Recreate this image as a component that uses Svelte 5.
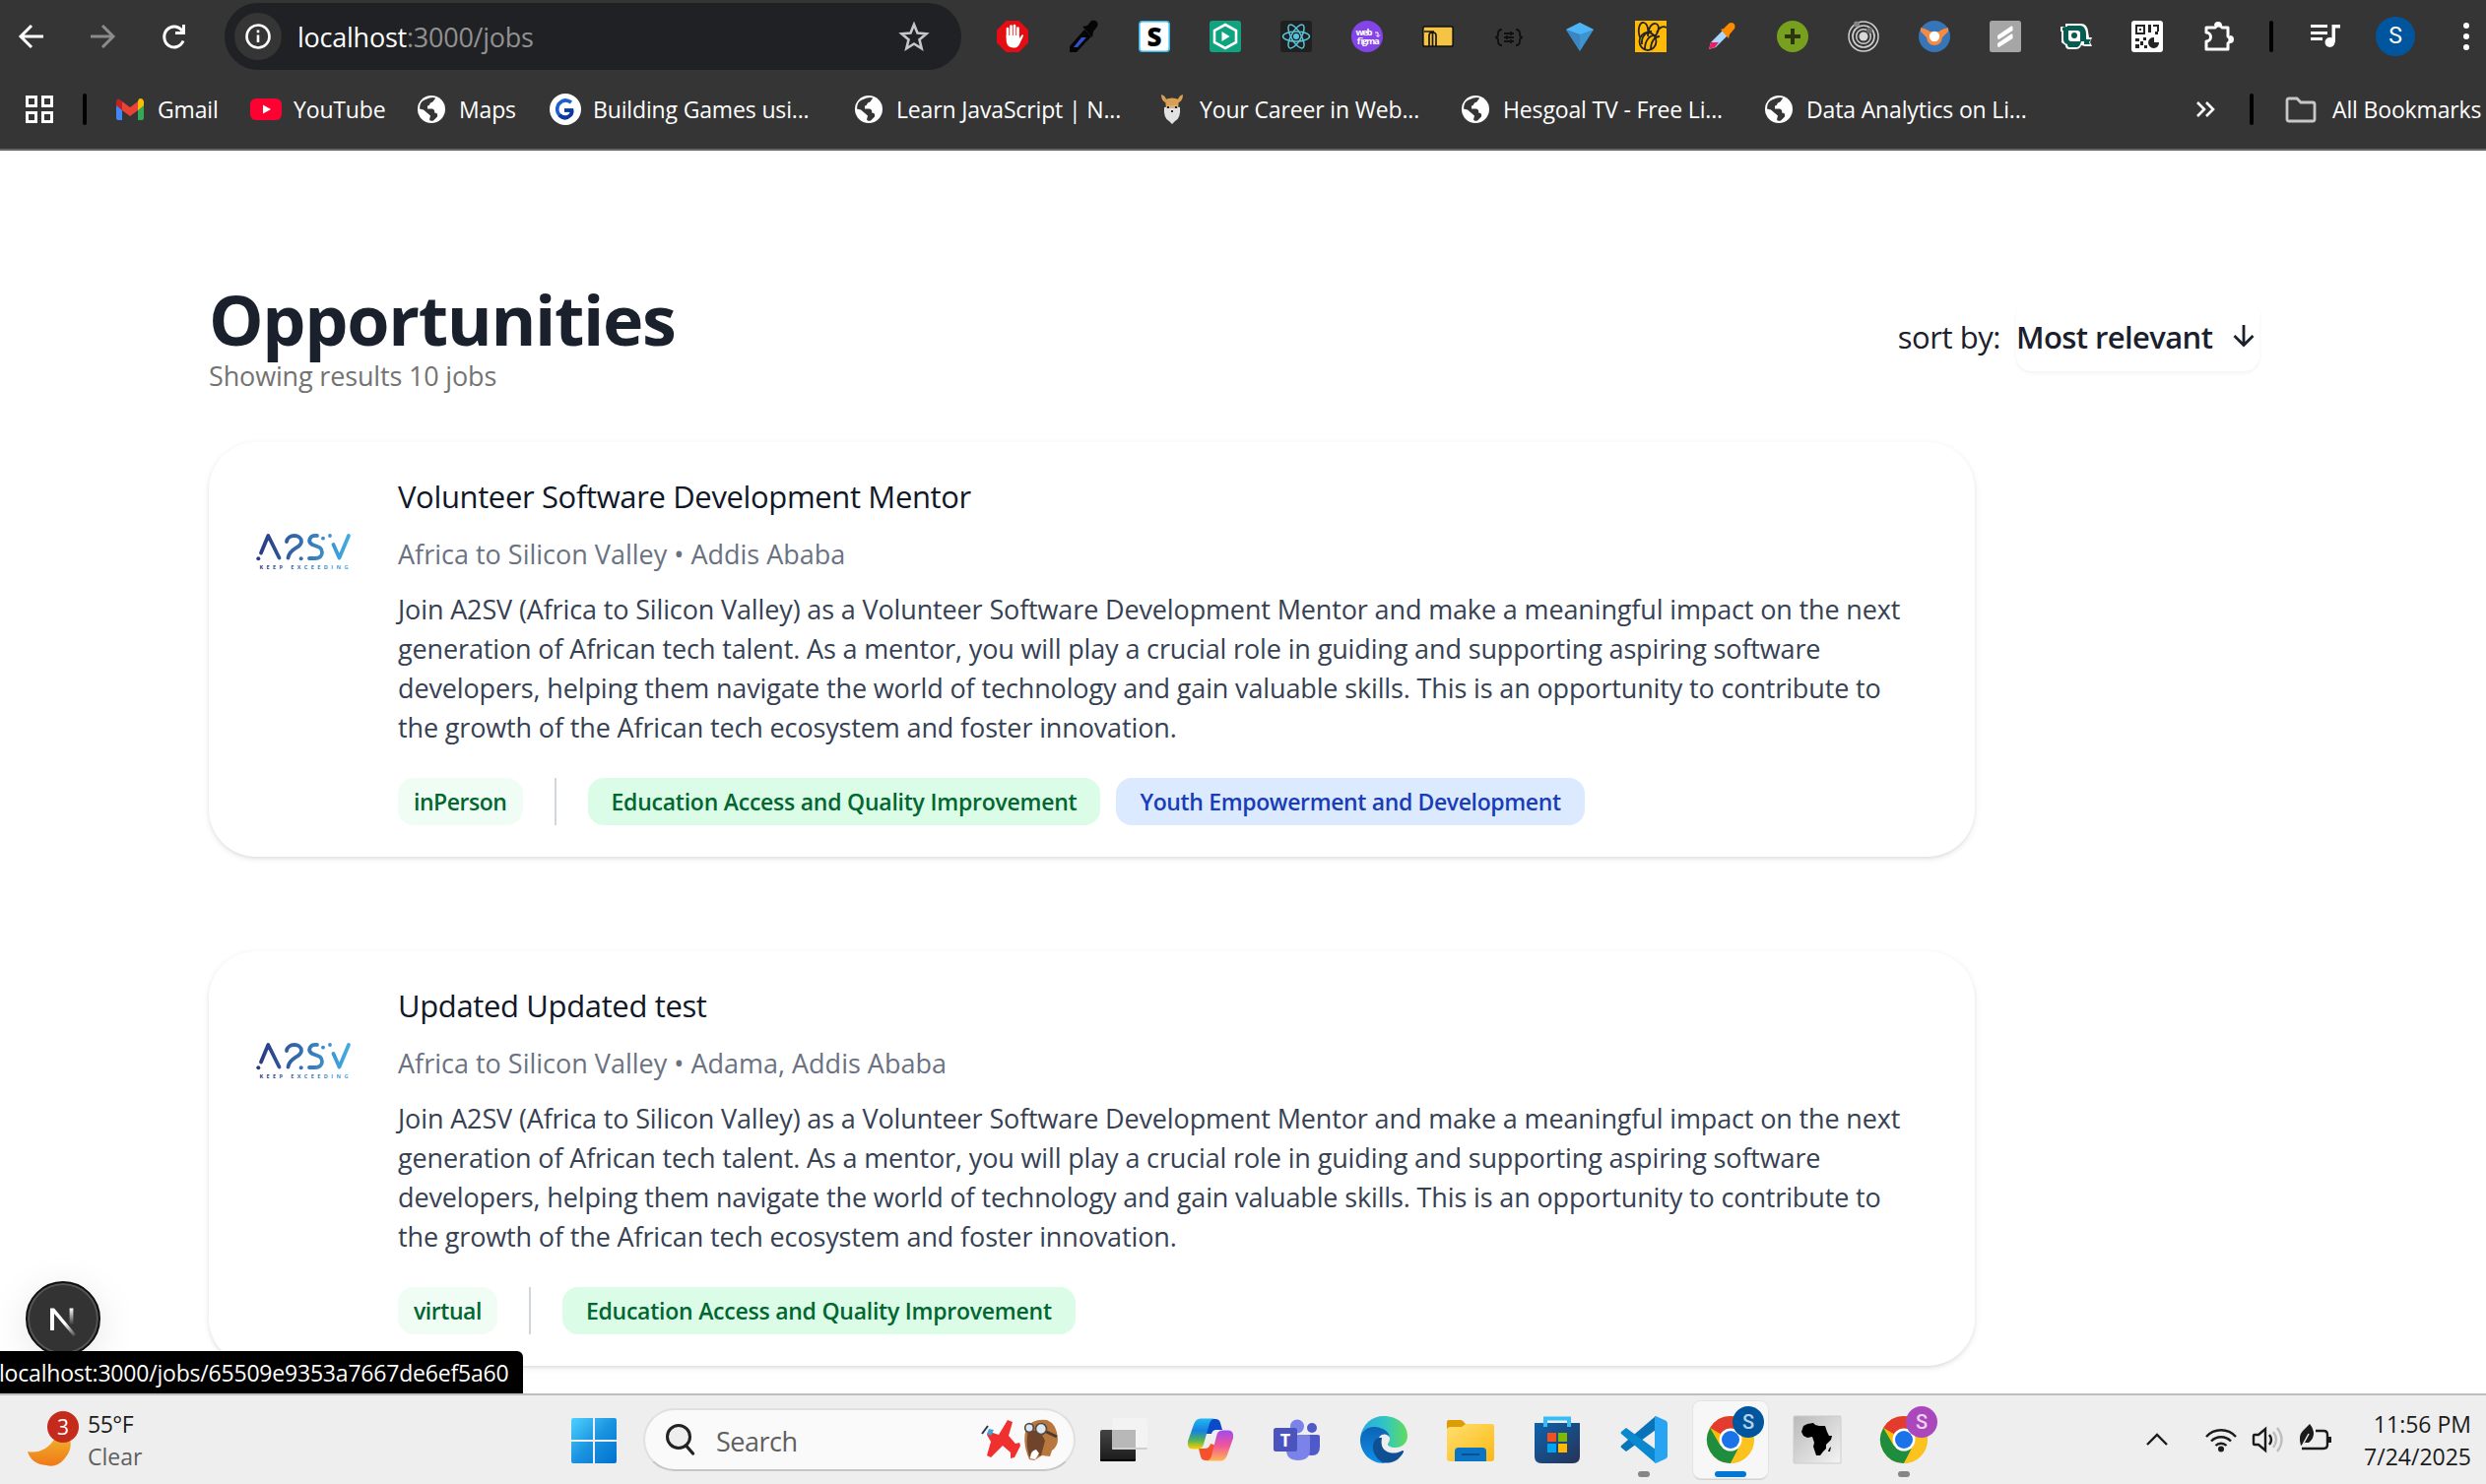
<script>
  const icons = {
    back: '<path d="M28 16H6M16 5 5 16l11 11" fill="none" stroke="#fff" stroke-width="3"/>',
    forward: '<path d="M4 16h22M16 5l11 11-11 11" fill="none" stroke="#8b8b8b" stroke-width="3"/>',
    reload: '<path d="M25 20.500a10 10.500 0 1 1-1-10" fill="none" stroke="#fff" stroke-width="3"/><path d="M27 4v10H17v-3h7V4z" fill="#fff"/>',
    info: '<circle cx="16" cy="16" r="11.500" fill="none" stroke="#fff" stroke-width="2.600"/><path d="M16 14.500v7.500M16 9.500v2.800" stroke="#fff" stroke-width="2.600"/>',
    star: '<path d="m16 4 3.500 8.600 9 .7-7 6 2.200 9L16 23.500l-7.700 4.800 2.200-9-7-6 9-.7z" fill="none" stroke="#c7c7c7" stroke-width="2.600"/>',
    puzzle: '<path d="M6 7h7a4 4 0 0 1 7 0h6v9a4 4 0 0 1 0 7v6H4v-8a4.500 4.500 0 0 0 0-9V7z" fill="none" stroke="#fff" stroke-width="3" stroke-linejoin="round"/><path d="M12 5a4 4 0 0 1 8 0zM28 15a4 4 0 0 1 0 8z" fill="#fff"/>',
    music: '<path d="M1 5.500h17M1 12.500h17M1 18.500h12" stroke="#fff" stroke-width="3"/><circle cx="20.500" cy="22" r="5" fill="#fff"/><path d="M22.500 22V4H31v3.500h-5V22z" fill="#fff"/>',
    dots: '<circle cx="16" cy="5" r="3" fill="#fff"/><circle cx="16" cy="16" r="3" fill="#fff"/><circle cx="16" cy="27" r="3" fill="#fff"/>',
    hand: '<path d="M9.500 0h13L32 9.500v13L22.500 32h-13L0 22.500v-13z" fill="#e30d13"/><path d="M11 17V8M14.500 16V5.500M18 16V5M21.500 17V7.500" stroke="#fff" stroke-width="2.700" stroke-linecap="round"/><path d="M9.700 15h13.200l.5 3 1.600-3c1-1.500 2.500-.8 2 .5l-4 8.500c-1.500 3-3.500 3.500-6 3.500-4.500 0-7.300-3-7.300-7.500z" fill="#fff"/>',
    dropper: '<path d="M2 32v-6L17 9l7 7L9 32z" fill="#050505"/><path d="M6 27 14 17h5l-9 10z" fill="#3152c4"/><path d="m15 6 5-1 4-5c5-1 8 2 6 6l-4 5-1 6z" fill="#050505"/>',
    slant: '<rect x=".8" y=".8" width="30.400" height="30.400" rx="3" fill="#fff" stroke="#38b8e8" stroke-width="1.600"/><text x="16" y="25.500" font-family="Open Sans" font-weight="800" font-size="26" text-anchor="middle" fill="#000">S</text>',
    play: '<rect width="32" height="32" rx="3" fill="#10a37f"/><path d="m16 4 11 6v12l-11 6-11-6V10z" fill="none" stroke="#fff" stroke-width="2.600"/><path d="M12.500 11v10l8-5z" fill="#fff"/>',
    react: '<rect width="32" height="32" rx="3" fill="#202020"/><g fill="none" stroke="#57c4dc" stroke-width="1.500"><ellipse cx="16" cy="16" rx="13.500" ry="5"/><ellipse cx="16" cy="16" rx="13.500" ry="5" transform="rotate(60 16 16)"/><ellipse cx="16" cy="16" rx="13.500" ry="5" transform="rotate(120 16 16)"/></g><circle cx="16" cy="16" r="3" fill="#57c4dc"/>',
    webfigma: '<circle cx="16" cy="16" r="16" fill="#8344e8"/><g font-family="Open Sans" font-weight="700" font-size="9.500" fill="#fff"><text x="4.500" y="15" textLength="17">web</text><text x="4.500" y="23.500" textLength="23">figma</text></g><path d="M24 12h3v4m-2-1.500 2 2 2-2" fill="none" stroke="#fff"/>',
    folderArc: '<rect x=".8" y="5.800" width="30.400" height="20.400" rx="2" fill="#f6c444" stroke="#161616" stroke-width="1.700"/><path d="M2 11h10M7 26V15q0-3 3-3h1q3 0 3 3v11M10.500 12V26" fill="none" stroke="#161616" stroke-width="1.700"/>',
    braces: '<path d="M9 9q-4 0-4 4v1q0 3-3 3 3 0 3 3v1q0 4 4 4M23 9q4 0 4 4v1q0 3 3 3-3 0-3 3v1q0 4-4 4M11 13h10M11 17h10M11 21h10M18 11v4M14 15v4M18 19v4" fill="none" stroke="#111" stroke-width="1.900"/>',
    gem: '<path d="M2 9 16 2l14 7-14 22z" fill="#3d94d1"/><path d="M2 9 16 2l14 7-14 5z" fill="#4db5f5"/><path d="M16 14v17L2 9z" fill="#3a86c0"/>',
    bee: '<path d="M0 0h32v32H0z" fill="#ffba08"/><g fill="none" stroke="#222" stroke-width="1.800"><ellipse cx="13" cy="21" rx="8.500" ry="9"/><path d="M5 17C2 8 5 1 9 2s5 8 4 14M13 15c0-7 4-13 8-12s4 8-1 13M7 24C6 16 12 10 17 11M10 29c0-9 5-15 11-14M16 29c0-8 4-13 9-13M22 12c2-5 6-7 10-5"/></g>',
    picker: '<path d="M3 29 5 22 17 10l5 5L10 27z" fill="#a9d7ff"/><path d="m3 29 2-7h8l-4 5z" fill="#ec1c64"/><path d="m15 9 3-1 5-5c4-3 8 1 6 5l-5 6-1 4z" fill="#ff8a00"/>',
    plus: '<circle cx="16" cy="16" r="16" fill="#76a01d"/><path d="M16 8v16M8 16h16" stroke="#2c3510" stroke-width="4"/>',
    orbit: '<g fill="none" stroke="#cfcfcf"><circle cx="16" cy="16" r="15" stroke-width="1.500"/><circle cx="16" cy="16" r="11" stroke-width="1.700"/><circle cx="16" cy="16" r="7.300" stroke-width="1.500"/></g><circle cx="16" cy="16" r="4.500" fill="#d8d8d8"/><circle cx="9" cy="3.500" r="3" fill="#858585"/><circle cx="22" cy="10" r="3" fill="#6b6b6b"/>',
    ring: '<circle cx="16" cy="16" r="16" fill="#3675b8"/><path d="M2 7q8 2 9 4h10q1-2 9-4v4l-6 6q-1 8-8 8t-8-8l-6-6z" fill="#f58a42"/><circle cx="16" cy="16" r="5.200" fill="#fff"/>',
    scrimba: '<rect width="32" height="32" rx="2.500" fill="#a6a6a6"/><path d="m8 15 14-9.500q1.500-.5 1.500 1v3.500L9.500 19Q8 19 8 17zm0 8 14-9.500q1.500-.5 1.500 1V18L9.500 27Q8 27 8 25z" fill="#fff"/>',
    ebird: '<path d="M5 3h16q6 0 7 8l1 6h3l-2 5 2 4h-7l-4-1q-1 4-6 4H9q-4 0-4-4l-4-3V11H0V6h5z" fill="#fff"/><path d="M2 7q1-1 5-1V5h13q5 0 6 8v6h5l-2 3 1 2h-6v-3h-3q-1 5-4 6H9q-2 0-2-3-4-1-4-5V10H2z" fill="#065c50"/><path d="M8 10h9q3 0 3 3v8H11q-3 0-3-3z" fill="#fff"/><circle cx="14" cy="15" r="3" fill="#065c50"/>',
    qr: '<rect width="32" height="32" rx="3" fill="#fff"/><g fill="#252525"><path d="M4 4h10v10H4zm2 2v6h6V6zM8 8h2v2H8zM17 4h3v8h-3zM22 4h6v7h-2V6h-4zM4 18h4v3H4zM9 21h3v4H9zM4 24h4v4H4zM12 17h3v3h-3zM13 25h3v3h-3zM24 11h3v3h-3z"/><path d="M23 17v5h5a5.500 5.500 0 1 1-5-5z"/></g>',
    apps: '<path d="M3.500 3.500h9v9h-9zM19.500 3.500h9v9h-9zM3.500 19.500h9v9h-9zM19.500 19.500h9v9h-9z" fill="none" stroke="#fff" stroke-width="3"/>',
    gmail: '<path d="M2 8v17q0 2 2 2h4V13z" fill="#4285f4"/><path d="M30 8v17q0 2-2 2h-4V13z" fill="#34a853"/><path d="M24 8v9l6-5V8q-1-4-5-2.500z" fill="#fbbc04"/><path d="M8 8v9l8 6 8-6V8l-8 6z" fill="#ea4335"/><path d="M8 17V8Q3 3 2 8v4z" fill="#c5221f"/>',
    youtube: '<rect y="5" width="32" height="22" rx="6" fill="#ff0033"/><path d="M13 11.500v9l8-4.500z" fill="#fff"/>',
    globe: '<circle cx="16" cy="16" r="14" fill="#fff"/><path d="M14 4.500q4-1 6 0-1 4-5 5-1 3-3 3v3h5q3 1 2 4 4 0 3 4l-4 4q-3 1-4-1l1-4-7-6-4-1q0-7 5-9z" fill="#353535"/><path d="M19 6q4 0 7 6-2 5-6 3-4-2-5 0-2-4 2-5z" fill="#fff"/>',
    gcircle: '<circle cx="16" cy="16" r="16" fill="#fff"/><path d="M22 9q-7-5-13 2-3 6 1 11 6 5 11 0 2-2 1.500-5H15" fill="none" stroke="#1d5fd0" stroke-width="3.600"/><path d="M10 22q6 5 11 0 2-2 1.500-5H15" fill="none" stroke="#0b3a9c" stroke-width="3.600"/>',
    yak: '<path d="M5 1q0 6 4 8h14q4-2 4-8-4 1-5 5H10Q9 2 5 1z" fill="#d7a055"/><path d="M9 6q7-3 14 0l-1 10H10z" fill="#d7a055"/><path d="M8 14q4-1 8 0 4-1 8 0 1 11-5 14l-3 3-3-3Q7 25 8 14z" fill="#e2e2e2"/><path d="M10 12h12v3H10z" fill="#dcae80"/><path d="M11 14h2M19 14h2M15 18h2" stroke="#222" stroke-width="1.800"/>',
    chevrons: '<path d="m7 9 7 7-7 7m9-14 7 7-7 7" fill="none" stroke="#fff" stroke-width="2.600"/>',
    folder: '<path d="M2 26V7q0-2 2-2h8l4 4h12q2 0 2 2v15q0 2-2 2H4q-2 0-2-2z" fill="none" stroke="#c7c7c7" stroke-width="2.800"/>'
  };

  const extensions = ['hand', 'dropper', 'slant', 'play', 'react', 'webfigma', 'folderArc', 'braces', 'gem', 'bee', 'picker', 'plus', 'orbit', 'ring', 'scrimba', 'ebird', 'qr', 'puzzle'];

  const bookmarks = [
    ['gmail', 'Gmail'],
    ['youtube', 'YouTube'],
    ['globe', 'Maps'],
    ['gcircle', 'Building Games usi...'],
    ['globe', 'Learn JavaScript | N...'],
    ['yak', 'Your Career in Web...'],
    ['globe', 'Hesgoal TV - Free Li...'],
    ['globe', 'Data Analytics on Li...']
  ];

  const lines = [
    'Join A2SV (Africa to Silicon Valley) as a Volunteer Software Development Mentor and make a meaningful impact on the next',
    'generation of African tech talent. As a mentor, you will play a crucial role in guiding and supporting aspiring software',
    'developers, helping them navigate the world of technology and gain valuable skills. This is an opportunity to contribute to',
    'the growth of the African tech ecosystem and foster innovation.'
  ];

  const jobs = [
    { title: 'Volunteer Software Development Mentor', place: 'Africa to Silicon Valley • Addis Ababa', mode: 'inPerson', tags: ['Education Access and Quality Improvement', 'Youth Empowerment and Development'] },
    { title: 'Updated Updated test', place: 'Africa to Silicon Valley • Adama, Addis Ababa', mode: 'virtual', tags: ['Education Access and Quality Improvement'] }
  ];

  const chrome = '<circle cx="24" cy="24" r="24" fill="#fbbc04"/><path d="M24 24 3.200 12A24 24 0 0 1 44.800 12z" fill="#e33b2e"/><path d="M3.200 12A24 24 0 0 0 24 48l10.400-18L24 24 13.600 30z" fill="#1e8e3e"/><path d="M24 13h20.800A24 24 0 0 1 24 48l9.500-18.500z" fill="#fcc31e"/><circle cx="24" cy="24" r="11.500" fill="#fff"/><circle cx="24" cy="24" r="9" fill="#1a73e8"/>';

  const tasks = [
    { name: 'taskview', art: '<defs><linearGradient id="tv" x2="0" y2="1"><stop stop-color="#444"/><stop offset="1" stop-color="#1a1a1a"/></linearGradient></defs><rect y="14" width="36" height="32" rx="2" fill="url(#tv)"/><path d="M0 44h36v1q0 1-2 1H2q-2 0-2-1z" fill="#000"/><rect x="12" y="2" width="36" height="32" rx="2" fill="#f3f3f3"/><path d="M12 14h24v19H14q-2 0-2-2z" fill="#b8b8b8"/><path d="M12 32h36v1q0 1-2 1H14q-2 0-2-1z" fill="#cfcfcf"/>' },
    { name: 'copilot', art: '<defs><linearGradient id="c1" x2="0" y2="1"><stop stop-color="#22b8f0"/><stop offset=".4" stop-color="#1681e0"/><stop offset=".7" stop-color="#4fb15c"/><stop offset="1" stop-color="#ffd000"/></linearGradient><linearGradient id="c2" x2="0" y2="1"><stop stop-color="#a04cf0"/><stop offset=".5" stop-color="#f0559a"/><stop offset="1" stop-color="#ffb550"/></linearGradient></defs><path d="M22 3h7q4 0 5 4l2 7h-6q-4 0-5 4l-6 0z" fill="#0a49c8"/><path d="M26 45h-7q-4 0-5-4l-2-8h6q5 0 6-5l6 2z" fill="#f4512c"/><path d="M14 2.500h14q-4 1-5 5l-6 21q-1 5-6 5H6q-6 0-5-8l6-17q2-6 7-6z" fill="url(#c1)"/><path d="M34 45.500H20q4-1 5-5l5-20q1-6 6-6h6q6 0 5 8l-6 17q-2 6-7 6z" fill="url(#c2)"/>' },
    { name: 'teams', art: '<circle cx="24" cy="10.500" r="7" fill="#7b83eb"/><circle cx="39" cy="12" r="5" fill="#5059c9"/><path d="M30 19h15q2 0 2 2v10q0 9-8 9-7 0-9-6z" fill="#5059c9"/><path d="M13 19h22q2 0 2 2v13q0 11-12 11T13 34z" fill="#7b83eb"/><rect y="12" width="24" height="24" rx="2.500" fill="#4b53bc"/><text x="12" y="31" font-family="Open Sans" font-weight="700" font-size="18" text-anchor="middle" fill="#fff">T</text>' },
    { name: 'edge', art: '<defs><linearGradient id="e1"><stop stop-color="#2aa8e0"/><stop offset=".5" stop-color="#2fc4c8"/><stop offset="1" stop-color="#62dc5c"/></linearGradient><linearGradient id="e2" x2="0" y2="1"><stop stop-color="#0c62b5"/><stop offset="1" stop-color="#1090e8"/></linearGradient></defs><path d="M0 22C2 8 12 0 24 0c14 0 24 9 24 20 0 8-6 12-12 12-5 0-8-1.500-8-3 0-2 2-2.500 2-7 0-5-6-10-14-10C8 12 2 16 0 22z" fill="url(#e1)"/><path d="M0 24c0-7 6-13 14-13 9 0 16 5 16 11-2-4-8-5-11 0-5 9 1 20 11 21l-6 5C10 48 0 37 0 24z" fill="url(#e2)"/><path d="M19 22c-7 2-8 12-3 19 3 5 8 7 13 6.500 7-1 12-5 15-11 .5-1-.5-2-1.500-1.300C34 40 24 37 22 30c-1-4 0-6 0-8z" fill="#0f4f94"/>' },
    { name: 'files', art: '<defs><linearGradient id="f1" x2="1" y2="1"><stop stop-color="#ffdf70"/><stop offset="1" stop-color="#fcb913"/></linearGradient></defs><path d="M0 6q0-2 2-2h12q2 0 3 2l2 2v5H0z" fill="#dc9c04"/><path d="M0 13q1-2 4-2h11l4-3h26q3 0 3 2v33q0 3-3 3H3q-3 0-3-3z" fill="url(#f1)"/><path d="M8 46V36q0-4 4-4h24q4 0 4 4v10z" fill="#0c74c4"/><path d="M15 39h18" stroke="#0a4f90" stroke-width="2"/>' },
    { name: 'store', art: '<defs><linearGradient id="s1" x2="1" y2="1"><stop stop-color="#0d63ad"/><stop offset="1" stop-color="#273256"/></linearGradient></defs><path d="M1 7h46v34q0 7-7 7H8q-7 0-7-7z" fill="url(#s1)"/><path d="M12 11V2.500h24V11" fill="none" stroke="#35bdf5" stroke-width="4"/><path d="M14 17h9v9h-9z" fill="#f25022"/><path d="M25 17h9v9h-9z" fill="#7fba00"/><path d="M14 28h9v9h-9z" fill="#00a4ef"/><path d="M25 28h9v9h-9z" fill="#ffb900"/>' },
    { name: 'code', mark: 'dot', art: '<path d="M36 0v14L6 36l-5-4q-1-1 0-2z" fill="#0873b8"/><path d="M36 48V34L6 12l-5 4q-1 1 0 2z" fill="#0a88d0"/><path d="m36 0 10 4.500q2 1 2 3v33q0 2-2 3L36 48l-1-1V1z" fill="#29a4f2"/>' },
    { name: 'chrome', mark: 'bar', badge: 'blue', art: chrome },
    { name: 'africa', art: '<defs><linearGradient id="a1" x2="1" y2="1"><stop stop-color="#b9b9b9"/><stop offset="1" stop-color="#f4f4f4"/></linearGradient></defs><rect width="48" height="48" rx="1" fill="url(#a1)" stroke="#ccc"/><path d="m10 10 4-2 6-1 2 2 4 1 6 0 2 6 2 4h3l-1 4-5 5v4l-3 3-3 4-4 0-3-9 1-4-2-6-5 1-4-2-2-4z"/><path d="m36 33 2-2-1 5-2 0z"/>' },
    { name: 'chrome2', mark: 'dot', badge: 'purple', art: chrome }
  ];
</script>

<div class="screen">
  <header class="browser">
    <div class="row toolbar">
      <svg class="i back" viewBox="0 0 32 32">{@html icons.back}</svg>
      <svg class="i fwd" viewBox="0 0 32 32">{@html icons.forward}</svg>
      <svg class="i reload" viewBox="0 0 32 32">{@html icons.reload}</svg>
      <div class="omnibox">
        <span class="site"><svg class="i" viewBox="0 0 32 32">{@html icons.info}</svg></span>
        <span class="url">localhost<span class="dim">:3000/jobs</span></span>
        <svg class="i" viewBox="0 0 32 32">{@html icons.star}</svg>
      </div>
      <div class="exts">
        {#each extensions as e}
          <svg class="i" viewBox="0 0 32 32">{@html icons[e]}</svg>
        {/each}
      </div>
      <i class="sep s1"></i>
      <svg class="i music" viewBox="0 0 32 32">{@html icons.music}</svg>
      <span class="avatar">S</span>
      <svg class="i dots" viewBox="0 0 32 32">{@html icons.dots}</svg>
    </div>
    <div class="row marks">
      <svg class="i" viewBox="0 0 32 32">{@html icons.apps}</svg>
      <i class="sep s2"></i>
      <nav>
        {#each bookmarks as [icon, label]}
          <span class="bm"><svg class="i" viewBox="0 0 32 32">{@html icons[icon]}</svg><span>{label}</span></span>
        {/each}
      </nav>
      <svg class="i" viewBox="0 0 32 32">{@html icons.chevrons}</svg>
      <i class="sep s3"></i>
      <svg class="i" viewBox="0 0 32 32">{@html icons.folder}</svg>
      <span class="allt">All Bookmarks</span>
    </div>
  </header>

  <main>
    <div class="head">
      <div>
        <h1>Opportunities</h1>
        <p class="count">Showing results 10 jobs</p>
      </div>
      <div class="sort">
        <span class="by">sort by:</span>
        <button><span>Most relevant</span><svg viewBox="0 0 28 28"><path d="M14 3v20M4.500 14 14 23.500 23.500 14" fill="none" stroke="#1a202c" stroke-width="2.800" /></svg></button>
      </div>
    </div>

    {#each jobs as job}
      <article>
        <svg class="logo" viewBox="0 0 96 48">
          <defs><linearGradient id="lg" gradientUnits="userSpaceOnUse" x1="0" x2="96" y1="0" y2="0"><stop stop-color="#28357f" /><stop offset="1" stop-color="#43aee4" /></linearGradient></defs>
          <g fill="none" stroke="url(#lg)" stroke-width="3.800" stroke-linecap="round" stroke-linejoin="round">
            <path d="M5 25.500 12.300 8l11.200 22.500M31 14c1-8 15-8 15 0 0 7-12 6-13.500 16.500M62 8c-8-1-10 6-5 9 4 2 10 2 10 8 0 4-3 6-7 6h-6M78.500 17l6 13.500L94 8" />
          </g>
          <g fill="url(#lg)"><circle cx="2.300" cy="31.300" r="2" /><circle cx="45.700" cy="31.300" r="2" /><circle cx="68" cy="10.700" r="1.900" /><circle cx="75" cy="8" r="1.900" /></g>
          <text x="3.500" y="41.500" textLength="90" fill="url(#lg)">KEEP EXCEEDING</text>
        </svg>
        <div class="body">
          <h2>{job.title}</h2>
          <p class="place">{job.place}</p>
          <p class="desc">{#each lines as l}<span>{l}</span>{/each}</p>
          <div class="tags">
            <span class="tag mode">{job.mode}</span>
            <i></i>
            {#each job.tags as t, n}<span class="tag cat" class:youth={n === 1}>{t}</span>{/each}
          </div>
        </div>
      </article>
    {/each}
    <div class="next"><svg viewBox="0 0 76 76"><defs><linearGradient id="n1" x1="0" x2="0" y1="0" y2="1"><stop stop-color="#fff" /><stop offset="1" stop-color="#fff" stop-opacity="0" /></linearGradient><linearGradient id="n2" gradientUnits="userSpaceOnUse" x1="40" x2="51" y1="43" y2="57"><stop stop-color="#fff" /><stop offset="1" stop-color="#fff" stop-opacity="0" /></linearGradient></defs><path d="M25 50V27.500h4L51 54l-2.500 2L29 33v17z" fill="url(#n2)" /><path d="M44.600 27.500h3.800v17h-3.800z" fill="url(#n1)" /></svg></div>
    <div class="status">localhost:3000/jobs/65509e9353a7667de6ef5a60</div>
  </main>

  <footer>
    <div class="weather">
      <svg viewBox="0 0 52 58"><defs><linearGradient id="w" x2="0" y2="1"><stop stop-color="#f0bc30" /><stop offset="1" stop-color="#f07818" /></linearGradient></defs><path d="M38 20q12 14-1 29-8 9-18 6Q4 54 0 41q17 3 27-12z" fill="url(#w)" /><circle cx="36" cy="16" r="16" fill="#c42b1c" /><text x="36" y="23.500" text-anchor="middle">3</text></svg>
      <div><p class="temp">55°F</p><p class="clear">Clear</p></div>
    </div>
    <svg class="start" viewBox="0 0 46 46"><defs><linearGradient id="st" gradientUnits="userSpaceOnUse" x1="0" y1="0" x2="46" y2="46"><stop stop-color="#4cd2ff" /><stop offset=".5" stop-color="#1b93e0" /><stop offset="1" stop-color="#0071ce" /></linearGradient></defs><path d="M2 0h20v22H0V2q0-2 2-2zM24 0h20q2 0 2 2v20H24zM0 24h22v22H2q-2 0-2-2zM24 24h22v20q0 2-2 2H24z" fill="url(#st)" /></svg>
    <div class="search">
      <svg class="glass" viewBox="0 0 32 32"><circle cx="14" cy="13" r="11.500" fill="#eee" stroke="#222" stroke-width="3" /><path d="m21.500 22 7 8" stroke="#222" stroke-width="3.400" stroke-linecap="round" /></svg>
      <span>Search</span>
      <svg class="deco" viewBox="0 0 78 42">
        <path d="m27 1 5 2-4 14 7 8 4-1 1 3-6 12-4 1 0-6-8-7-12 12-4-2 4-14-4-7q1-5 6-2l6 2z" fill="#f02f2f" />
        <path d="m8 10 5 1-3 6-4-2z" fill="#3aa8dc" /><path d="m1 15 6-8" stroke="#35304f" stroke-width="2" />
        <path d="M46 9q7-10 21-8 10 4 11 19 0 8-6 12l-2 6-8-1-8 5-5-1-2-5q-5-14-1-27z" fill="#b8773f" />
        <path d="M48 12h12l5 10-4 15-12 1q-4-14-1-26z" fill="#70442a" />
        <path d="M50 40q0-8 6-9l3 4-4 6z" fill="#fff" /><path d="m60 10 17 8" stroke="#4c382c" stroke-width="3" />
        <circle cx="49" cy="9" r="4.300" fill="#dce9f5" stroke="#584b3f" stroke-width="1.700" /><circle cx="61" cy="10" r="5.500" fill="#dce9f5" stroke="#584b3f" stroke-width="1.700" />
      </svg>
    </div>
    <div class="tasks">
      {#each tasks as t}
        <div class="task" class:active={t.mark === 'bar'}>
          <svg viewBox="0 0 48 48">{@html t.art}</svg>
          {#if t.badge}<b class={t.badge}>S</b>{/if}
          {#if t.mark}<i class={t.mark}></i>{/if}
        </div>
      {/each}
    </div>
    <div class="tray">
      <svg class="up" viewBox="0 0 32 32"><path d="m6 21 10-10 10 10" /></svg>
      <svg class="wifi" viewBox="0 0 32 32"><path d="M1 13a20 20 0 0 1 30 0M6 17.500a14 14 0 0 1 20 0M10.500 22a8 8 0 0 1 11 0" /><circle cx="16" cy="25.500" r="3" fill="#1b1b1b" stroke="none" /></svg>
      <svg class="vol" viewBox="0 0 32 32"><path d="M1 12v8q0 1 1 1h4l7 6V5l-7 6H2q-1 0-1 1zM17 11q4 5 0 10" /><path d="M21 8q6 8 0 16M25 4q9 12 0 24" stroke="#bdbdbd" /></svg>
      <svg class="bat" viewBox="0 0 32 32"><path d="M16 7h8q4 0 4 4v10q0 4-4 4H2" /><path d="M28 13h4v6h-4z" fill="#1b1b1b" stroke="none" /><path d="M10 0q4 5 4 10t-5 9l-4 0-4 3Q-2 12 3 7z" fill="#1b1b1b" stroke="none" /><path d="M3 21 9 10" stroke="#eee" stroke-width="1.500" /></svg>
      <div class="clock"><p>11:56 PM</p><p>7/24/2025</p></div>
    </div>
  </footer>
</div>

<style>
  :global(body) { margin: 0; overflow: hidden; }
  * { box-sizing: border-box; }
  p, h1, h2 { margin: 0; }
  svg { overflow: visible; }
  .screen { width: 2524px; height: 1507px; display: flex; flex-direction: column; font-family: 'Open Sans', 'Noto Sans', sans-serif; overflow: hidden; background: #fff; white-space: nowrap; }
  .i { width: 32px; height: 32px; flex: none; display: block; }
  .browser { height: 153px; flex: none; background: #353535; border-bottom: 2px solid #656565; }
  .row { display: flex; align-items: center; height: 74px; }
  .toolbar { padding-left: 16px; }
  .fwd { margin-left: 40px; }
  .reload { margin-left: 41px; }
  .omnibox { margin-left: 35px; width: 748px; height: 68px; border-radius: 34px; background: #202124; display: flex; align-items: center; padding: 0 32px 0 10px; color: #fff; }
  .site { width: 48px; height: 48px; border-radius: 50%; background: #353535; display: grid; place-items: center; }
  .url { margin-left: 16px; font-size: 27px; letter-spacing: -0.24px; flex: 1; }
  .dim { color: #919191; }
  .exts { margin-left: 36px; display: flex; gap: 40px; }
  .sep { width: 4px; height: 32px; border-radius: 2px; background: #000; flex: none; }
  .s1 { margin-left: 36px; }
  .music { margin-left: 37px; }
  .avatar { margin-left: 35px; width: 40px; height: 40px; border-radius: 50%; background: #00569e; color: #fff; font: 23px/40px Roboto, sans-serif; text-align: center; }
  .dots { margin-left: 36px; }
  .marks { padding-left: 24px; color: #fff; font-size: 23px; letter-spacing: -0.15px; }
  .s2 { margin: 0 28px; }
  nav { display: grid; grid-template-columns: 138px 168px 136px 308px 308px 308px 308px 434px; }
  .bm { display: flex; gap: 12px; align-items: center; }
  .s3 { margin: 0 32px 0 28px; }
  .allt { margin-left: 16px; }

  main { position: relative; flex: 1; overflow: hidden; padding: 135px 230px 0 212px; }
  .head { display: flex; justify-content: space-between; height: 161px; }
  h1 { font-size: 70px; line-height: 72px; font-weight: 700; letter-spacing: -1.35px; color: #1a202c; }
  .count { margin-top: 2px; font-size: 27px; line-height: 40px; letter-spacing: -0.16px; color: #737373; }
  .sort { display: flex; align-items: center; height: 72px; margin-top: 17px; font-size: 31px; color: #1a202c; }
  .by { padding-top: 2px; letter-spacing: -0.45px; }
  button { margin-left: 16px; width: 247px; height: 72px; padding: 0 2px 0 0; border: 0; border-radius: 16px; background: #fff; box-shadow: 0 2px 4px rgb(0 0 0 / 5%); display: flex; align-items: center; justify-content: space-between; font: 600 31px 'Open Sans', sans-serif; letter-spacing: -0.6px; color: #1a202c; }
  button span { padding-top: 2px; }
  button svg { width: 28px; height: 28px; }
  article { width: 1793px; height: 421px; margin-bottom: 96px; padding: 31px 48px 32px; border-radius: 48px; display: flex; gap: 48px; background: #fff; box-shadow: 0 2px 6px rgb(0 0 0 / 10%), 0 2px 4px -2px rgb(0 0 0 / 10%); }
  .logo { width: 96px; height: 48px; flex: none; margin-top: 56px; }
  .logo text { font: 700 5.600px 'Open Sans', sans-serif; }
  h2 { font-size: 31px; line-height: 48px; font-weight: 400; letter-spacing: -0.36px; color: #101828; }
  .place { margin-top: 15px; font-size: 27px; line-height: 40px; color: #6a7282; }
  .desc { margin-top: 16px; font-size: 27px; line-height: 40px; letter-spacing: -0.14px; color: #364153; }
  .desc span { display: block; }
  .tags { margin-top: 31px; display: flex; height: 48px; }
  .tag { border-radius: 16px; line-height: 47px; padding-top: 1px; font-size: 23px; font-weight: 600; color: #016630; }
  .mode { padding: 1px 16px 0; background: #f0fdf4; letter-spacing: -0.46px; }
  .tags i { width: 2px; background: #d1d5dc; margin: 0 32px; }
  .cat { padding: 1px 24px 0; background: #dbfce7; margin-right: 16px; letter-spacing: -0.24px; }
  .cat.youth { background: #dbeafe; color: #193cb8; letter-spacing: -0.37px; }
  .next { position: absolute; left: 26px; top: 1148px; width: 76px; height: 76px; border-radius: 50%; background: #333; border: 2px solid #111; box-shadow: inset 0 0 0 2px #555, 0 8px 40px rgb(0 0 0 / 10%); }
  .next svg { display: block; width: 76px; height: 76px; margin: -2px; }
  .status { position: absolute; left: 0; top: 1219px; width: 531px; height: 43px; padding-top: 1px; border-radius: 0 6px 0 0; background: #000; color: #fff; font-size: 23px; line-height: 43px; letter-spacing: -0.2px; text-indent: -1px; }

  footer { height: 92px; flex: none; background: #eee; border-top: 2px solid #bdbfbd; display: flex; align-items: center; color: #1b1b1b; }
  .weather { display: flex; padding-left: 28px; width: 580px; gap: 9px; font-size: 23px; line-height: 33px; }
  .weather div { padding-top: 1px; }
  .weather svg { width: 52px; height: 58px; margin-top: 4px; }
  .weather text { font: 21px 'Open Sans', sans-serif; fill: #fff; }
  .temp { letter-spacing: -0.5px; }
  .clear { color: #5f5f5f; }
  .start { width: 46px; height: 46px; flex: none; margin-top: 2px; }
  .search { margin-left: 27px; width: 439px; height: 64px; flex: none; border-radius: 32px; background: #fafafa; border: 2px solid #e0e0e0; border-bottom-color: #c6c6c6; display: flex; align-items: center; padding: 0 16px 0 20px; font-size: 27px; letter-spacing: -0.5px; color: #5f5f5f; }
  .search span { padding-top: 2px; }
  .glass { width: 32px; height: 32px; margin-right: 20px; }
  .deco { width: 78px; height: 42px; margin-left: auto; }
  .tasks { display: flex; gap: 12px; margin-left: 11px; }
  .task { position: relative; width: 76px; height: 78px; border-radius: 8px; padding: 15px 14px; }
  .active { background: #f7f7f7; box-shadow: 0 0 0 1px #e3e3e3, 0 2px 0 #d3d3d3; }
  .task svg { width: 48px; height: 48px; display: block; }
  .task b { position: absolute; left: 40px; top: 5px; width: 32px; height: 32px; border-radius: 50%; font: 500 20px/32px Roboto, sans-serif; text-align: center; }
  .blue { background: #00569e; color: #b7d0e6; }
  .purple { background: #ab47bc; color: #ecd3f0; }
  .task i { position: absolute; bottom: 1px; height: 6px; border-radius: 3px; }
  .dot { left: 32px; width: 12px; background: #868686; }
  .bar { left: 22px; width: 32px; background: #0078d4; }
  .tray { margin-left: auto; display: flex; align-items: center; padding-right: 15px; }
  .tray svg { width: 32px; height: 32px; fill: none; stroke: #1b1b1b; stroke-width: 2.400; }
  .wifi { margin-left: 33px; }
  .vol, .bat { margin-left: 16px; }
  .clock { width: 142px; padding-top: 2px; text-align: right; font-size: 23px; line-height: 33px; }
</style>
